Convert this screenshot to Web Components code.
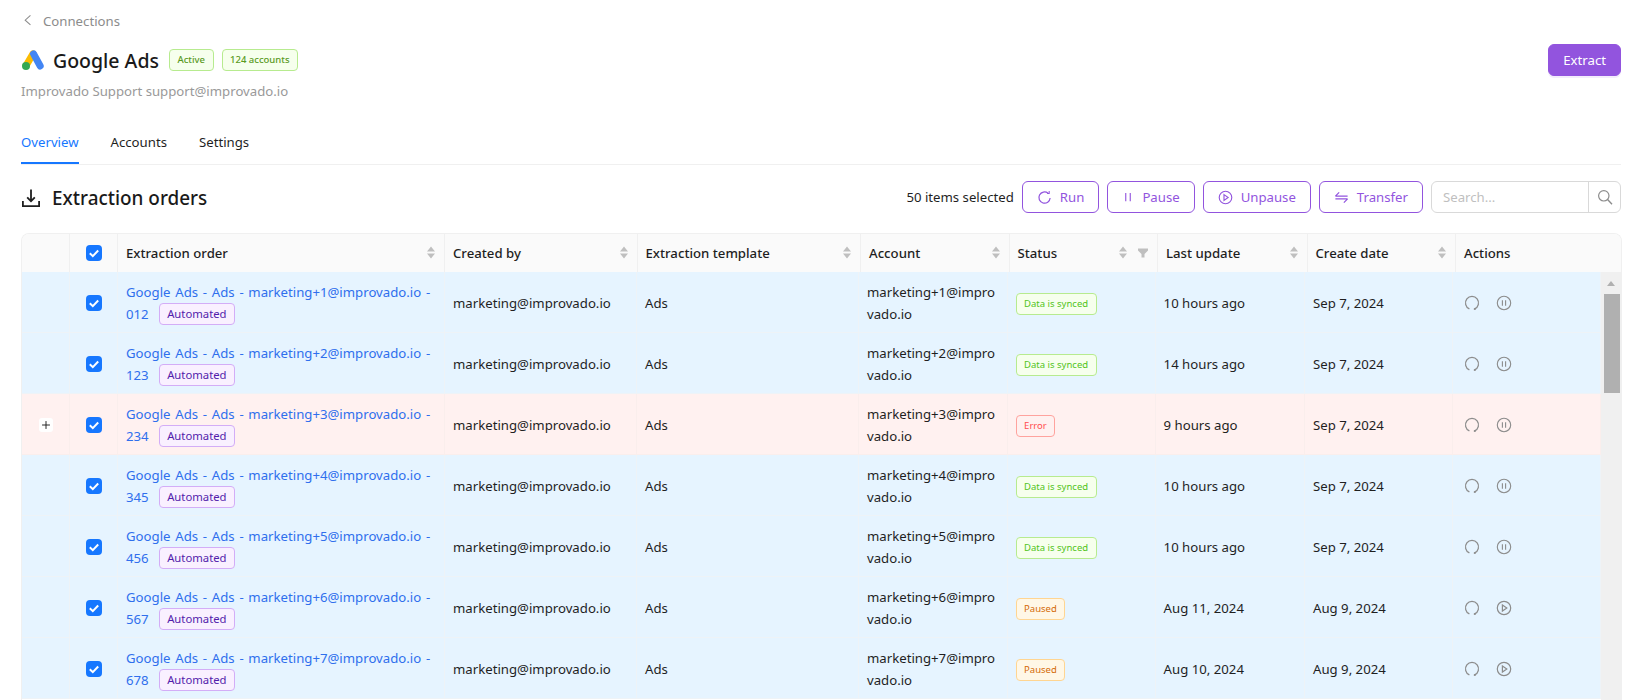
<!DOCTYPE html>
<html lang="en">
<head>
<meta charset="utf-8">
<title>Google Ads - Extraction orders</title>
<style>
    html, body { margin: 0; height: 700px; overflow: hidden; background: #fff; }
    body { font-family: "Noto Sans", "Liberation Sans", sans-serif; font-size: 13.2px; color: #1f1f1f; }
</style>
</head>
<body>
<connection-page>
    <page-header slot="header" name="Google Ads" owner="Improvado Support support@improvado.io" back="Connections">
        <ui-tag slot="tags" kind="green" size="small">Active</ui-tag>
        <ui-tag slot="tags" kind="green" size="small">124 accounts</ui-tag>
        <ui-button slot="action" primary>Extract</ui-button>
    </page-header>
    <ui-tabs slot="tabs" items="Overview,Accounts,Settings" active="0"></ui-tabs>
    <section-bar slot="bar" heading="Extraction orders">
        <span slot="count">50 items selected</span>
        <ui-button slot="tools" icon="run">Run</ui-button>
        <ui-button slot="tools" icon="pause">Pause</ui-button>
        <ui-button slot="tools" icon="play">Unpause</ui-button>
        <ui-button slot="tools" icon="transfer">Transfer</ui-button>
        <ui-search slot="tools" placeholder="Search..."></ui-search>
    </section-bar>
    <orders-table slot="table">
        <order-row n="1" code="012" status="synced" updated="10 hours ago" created="Sep 7, 2024" action="pause"></order-row>
        <order-row n="2" code="123" status="synced" updated="14 hours ago" created="Sep 7, 2024" action="pause"></order-row>
        <order-row n="3" code="234" status="error" updated="9 hours ago" created="Sep 7, 2024" action="pause"></order-row>
        <order-row n="4" code="345" status="synced" updated="10 hours ago" created="Sep 7, 2024" action="pause"></order-row>
        <order-row n="5" code="456" status="synced" updated="10 hours ago" created="Sep 7, 2024" action="pause"></order-row>
        <order-row n="6" code="567" status="paused" updated="Aug 11, 2024" created="Aug 9, 2024" action="play"></order-row>
        <order-row n="7" code="678" status="paused" updated="Aug 10, 2024" created="Aug 9, 2024" action="play"></order-row>
    </orders-table>
</connection-page>

<script>
const ICONS = {
    back: `<path d="M8.5 1.5 2.5 7l6 5.5" fill="none" stroke="currentColor" stroke-width="1.2"/>`,
    run: `<path d="M14 8.5A6 6 0 1 1 11.8 3.4" fill="none" stroke="currentColor" stroke-width="1.3"/><path d="M11.8 1v2.8H9.6" fill="none" stroke="currentColor" stroke-width="1.1" transform="translate(1.2 0)"/>`,
    retry: `<path d="M5.4 13.9A6.5 6.5 0 1 1 10.6 13.9" fill="none" stroke="currentColor" stroke-width="1.3"/><circle cx="10.8" cy="14" r="1.1" fill="currentColor"/>`,
    pause: `<path d="M5 2.5v11M11 2.5v11" fill="none" stroke="currentColor" stroke-width="1.5"/>`,
    pauseCircle: `<circle cx="8" cy="8" r="6.7" fill="none" stroke="currentColor" stroke-width="1.1"/><path d="M6.4 5.2v5.6M9.6 5.2v5.6" fill="none" stroke="currentColor" stroke-width="1.1"/>`,
    play: `<circle cx="8" cy="8" r="6.7" fill="none" stroke="currentColor" stroke-width="1.2"/><path d="M6.4 4.9 10.8 8l-4.4 3.1z" fill="none" stroke="currentColor" stroke-width="1.2"/>`,
    transfer: `<path d="M1.5 6.5h13M1.5 6.5 5.5 2.5M14.5 9.5h-13M14.5 9.5l-4 4" fill="none" stroke="currentColor" stroke-width="1.3"/>`,
    search: `<circle cx="6.8" cy="6.8" r="5.2" fill="none" stroke="currentColor" stroke-width="1.2"/><path d="m10.6 10.6 4.4 4.6" fill="none" stroke="currentColor" stroke-width="1.4"/>`,
    download: `<path d="M8 .5v10M4.6 7.4 8 10.8l3.4-3.4M.8 10.6v4.6h14.4v-4.6" fill="none" stroke="currentColor" stroke-width="1.6"/>`,
    check: `<path d="m3.8 8.2 3 2.9 5.4-5.6" fill="none" stroke="currentColor" stroke-width="2"/>`,
    plus: `<path d="M8 3.5v9M3.5 8h9" fill="none" stroke="currentColor" stroke-width="1.1"/>`,
};

function icon(name, size) {
    return `<svg width="${size}" height="${size}" viewBox="0 0 16 16" aria-hidden="true">${ICONS[name]}</svg>`;
}

class ConnectionPage extends HTMLElement {
    constructor() {
        super();
        this.attachShadow({ mode: "open" });
        this.shadowRoot.innerHTML = `
            <style>
                :host { display: block; padding: 0 31px 0 21px; }
                .tabs { display: block; margin-top: 28px; }
                .bar { display: block; margin-top: 16px; }
                .table { display: block; margin-top: 20px; }
            </style>
            <slot name="header"></slot>
            <div class="tabs"><slot name="tabs"></slot></div>
            <div class="bar"><slot name="bar"></slot></div>
            <div class="table"><slot name="table"></slot></div>
        `;
    }
}

class PageHeader extends HTMLElement {
    constructor() {
        super();
        this.attachShadow({ mode: "open" });
    }

    connectedCallback() {
        this.shadowRoot.innerHTML = `
            <style>
                :host { display: block; }
                .back { display: flex; align-items: center; gap: 6px; height: 22px; padding: 10px 0 12px 2px; color: #8c8c8c; line-height: 22px; }
                .back svg { display: block; }
                .main { display: flex; align-items: center; height: 32px; }
                .logo { display: block; margin: 0 9px 0 1px; }
                h1 { margin: 2px 10px 0 0; font-size: 19.5px; line-height: 28px; font-weight: 500; color: #1a1a1a; }
                .tags { display: flex; gap: 8px; margin-top: -1px; }
                .action { margin-left: auto; }
                .owner { margin-top: 4px; line-height: 22px; color: #999; }
            </style>
            <div class="back">${icon("back", 14)}<span>${this.getAttribute("back")}</span></div>
            <div class="main">
                <svg class="logo" width="22" height="20" viewBox="0 0 22 20" aria-hidden="true">
                    <path d="M11 3.8 4.3 15.2" stroke="#fbbc04" stroke-width="7" stroke-linecap="round"/>
                    <path d="M11.6 3.8 18.2 16" stroke="#4285f4" stroke-width="7" stroke-linecap="round"/>
                    <circle cx="4" cy="16" r="4" fill="#34a853"/>
                </svg>
                <h1>${this.getAttribute("name")}</h1>
                <div class="tags"><slot name="tags"></slot></div>
                <div class="action"><slot name="action"></slot></div>
            </div>
            <div class="owner">${this.getAttribute("owner")}</div>
        `;
    }
}

class UiTag extends HTMLElement {
    constructor() {
        super();
        this.attachShadow({ mode: "open" });
        this.shadowRoot.innerHTML = `
            <style>
                :host { display: inline-flex; align-items: center; box-sizing: border-box; height: 22px; padding: 0 7.5px; border: 1px solid; border-radius: 4px; font-size: 9.5px; white-space: nowrap; line-height: 20px; }
                :host([size="small"]) { font-weight: 500; }
                :host([kind="green"]) { background: #f6ffed; border-color: #b7eb8f; color: #52c41a; }
                :host([kind="green"][size="small"]) { color: #5a9a1f; }
                :host([kind="red"]) { background: #fff1f0; border-color: #ffa39e; color: #ff4d4f; }
                :host([kind="orange"]) { background: #fff7e6; border-color: #ffd591; color: #d46b08; }
                :host([kind="purple"]) { background: #f9f0ff; border-color: #d3adf7; color: #531dab; font-size: 11.3px; }
            </style>
            <slot></slot>
        `;
    }
}

class UiButton extends HTMLElement {
    constructor() {
        super();
        this.attachShadow({ mode: "open" });
    }

    connectedCallback() {
        const name = this.getAttribute("icon");
        this.shadowRoot.innerHTML = `
            <style>
                :host { display: inline-flex; align-items: center; gap: 8px; box-sizing: border-box; height: 32px; padding: 0 14px; border: 1px solid #9254de; border-radius: 6px; background: #fff; color: #9254de; line-height: 22px; white-space: nowrap; }
                :host([primary]) { height: 32px; background: #9254de; color: #fff; box-shadow: 0 2px 0 #f3ecfc; }
                svg { display: block; }
            </style>
            ${name ? icon(name, name === "pause" ? 12 : 15) : ""}<slot></slot>
        `;
    }
}

class UiTabs extends HTMLElement {
    constructor() {
        super();
        this.attachShadow({ mode: "open" });
    }

    connectedCallback() {
        const active = Number(this.getAttribute("active"));
        const items = this.getAttribute("items").split(",");
        this.shadowRoot.innerHTML = `
            <style>
                :host { display: flex; gap: 32px; height: 34px; border-bottom: 1px solid #f0f0f0; }
                .tab { height: 34px; box-sizing: border-box; padding: 1px 0 11px; line-height: 22px; color: #1f1f1f; }
                .on { color: #1677ff; border-bottom: 2px solid #1677ff; }
            </style>
            ${items.map((t, i) => `<div class="tab ${i === active ? "on" : ""}">${t}</div>`).join("")}
        `;
    }
}

class SectionBar extends HTMLElement {
    constructor() {
        super();
        this.attachShadow({ mode: "open" });
    }

    connectedCallback() {
        this.shadowRoot.innerHTML = `
            <style>
                :host { display: flex; align-items: center; height: 32px; }
                svg { display: block; margin: 2px 0 0 1px; }
                h2 { margin: 2px 0 0 12px; font-size: 18.9px; line-height: 28px; font-weight: 500; color: #1a1a1a; }
                .right { display: flex; align-items: center; margin-left: auto; }
                .count { margin-right: 8px; color: #1f1f1f; }
                .tools { display: flex; align-items: center; gap: 8px; }
            </style>
            ${icon("download", 18)}
            <h2>${this.getAttribute("heading")}</h2>
            <div class="right">
                <div class="count"><slot name="count"></slot></div>
                <div class="tools"><slot name="tools"></slot></div>
            </div>
        `;
    }
}

class UiSearch extends HTMLElement {
    constructor() {
        super();
        this.attachShadow({ mode: "open" });
    }

    connectedCallback() {
        this.shadowRoot.innerHTML = `
            <style>
                :host { display: flex; box-sizing: border-box; width: 190px; height: 32px; border: 1px solid #d9d9d9; border-radius: 6px; color: #bfbfbf; }
                .text { flex: 1; padding-left: 11px; line-height: 30px; }
                .btn { display: flex; align-items: center; justify-content: center; width: 31px; border-left: 1px solid #d9d9d9; color: #8c8c8c; }
            </style>
            <div class="text">${this.getAttribute("placeholder")}</div>
            <div class="btn">${icon("search", 16)}</div>
        `;
    }
}

class SortCaret extends HTMLElement {
    constructor() {
        super();
        this.attachShadow({ mode: "open" });
        this.shadowRoot.innerHTML = `
            <style>:host { display: block; } svg { display: block; }</style>
            <svg width="10" height="13" viewBox="0 0 10 13" aria-hidden="true">
                <path d="M5 .5 9 5.5H1zM5 12.5 1 7.5h8z" fill="#bfbfbf"/>
            </svg>
        `;
    }
}

class OrdersTable extends HTMLElement {
    constructor() {
        super();
        this.attachShadow({ mode: "open" });
    }

    connectedCallback() {
        const cols = [
            ["Extraction order", 1],
            ["Created by", 1],
            ["Extraction template", 1],
            ["Account", 1],
            ["Status", 2],
            ["Last update", 1],
            ["Create date", 1],
            ["Actions", 0],
        ];
        this.shadowRoot.innerHTML = `
            <style>
                :host { display: block; box-sizing: border-box; width: 1601px; border: 1px solid #f0f0f0; border-bottom: 0; border-radius: 8px 8px 0 0; overflow: hidden; }
                .head { display: grid; grid-template-columns: 48px 48px 327px 192.5px 223.5px 148.5px 148.5px 149.5px 148.5px 1fr; height: 38px; background: #fafafa; }
                .th { display: flex; align-items: center; gap: 8px; box-sizing: border-box; padding: 0 8px 1px; border-right: 1px solid #f0f0f0; font-weight: 500; color: #1f1f1f; }
                .th:last-child { border-right: 0; }
                .th span { flex: 1; }
                .th.mid { justify-content: center; padding: 0 0 1px; }
                .filter { display: block; margin: 0 1px 0 2px; }
                .body { display: flex; height: 428px; }
                .rows { width: 1579px; overflow: hidden; }
                .scroll { position: relative; flex: 1; background: #f0f0f0; }
                .up { width: 0; height: 0; margin: 9px auto 0; border: 4px solid transparent; border-top: 0; border-bottom: 5px solid #b0b0b0; }
                .thumb { height: 99px; margin: 8px 1px 0 3px; background: #b0b0b0; }
            </style>
            <div class="head">
                <div class="th"></div>
                <div class="th mid"><ui-checkbox></ui-checkbox></div>
                ${cols.map(([label, sort]) => `
                    <div class="th">
                        <span>${label}</span>
                        ${sort ? "<sort-caret></sort-caret>" : ""}
                        ${sort === 2 ? `<svg class="filter" width="10" height="10" viewBox="0 0 10 10" aria-hidden="true"><path d="M0 .5h10v2L6.5 6v3.5h-3V6L0 2.5z" fill="#bfbfbf"/></svg>` : ""}
                    </div>
                `).join("")}
            </div>
            <div class="body">
                <div class="rows"><slot></slot></div>
                <div class="scroll"><div class="up"></div><div class="thumb"></div></div>
            </div>
        `;
    }
}

class UiCheckbox extends HTMLElement {
    constructor() {
        super();
        this.attachShadow({ mode: "open" });
        this.shadowRoot.innerHTML = `
            <style>
                :host { display: block; width: 16px; height: 16px; border-radius: 4px; background: #1677ff; color: #fff; }
                svg { display: block; }
            </style>
            ${icon("check", 16)}
        `;
    }
}

const STATUS = {
    synced: ["green", "Data is synced"],
    error: ["red", "Error"],
    paused: ["orange", "Paused"],
};

class OrderRow extends HTMLElement {
    constructor() {
        super();
        this.attachShadow({ mode: "open" });
    }

    connectedCallback() {
        const n = this.getAttribute("n");
        const status = this.getAttribute("status");
        const [kind, label] = STATUS[status];
        const action = this.getAttribute("action") === "play" ? "play" : "pauseCircle";
        this.shadowRoot.innerHTML = `
            <style>
                :host { display: grid; grid-template-columns: 48px 48px 327px 192px 222px 148.6px 148px 149.4px 148px 148px; height: 61px; background: #e6f4ff; }
                :host([status="error"]) { background: #fff1f0; }
                .td { display: flex; align-items: center; box-sizing: border-box; height: 61px; padding: 2px 8px 0; border-right: 1px solid #eef3f7; border-bottom: 1px solid #eef3f7; line-height: 22px; color: #1f1f1f; min-width: 0; }
                :host([status="error"]) .td { border-color: #faeeec; }
                .mid { justify-content: center; padding: 2px 0 0; }
                .td > div { min-width: 0; }
                .link { color: #2f6fed; word-spacing: 1.3px; white-space: nowrap; }
                .second { display: flex; align-items: center; gap: 10px; height: 22px; }
                .state { margin-top: 2px; }
                .account { word-break: break-all; }
                .plus { display: flex; width: 14px; height: 14px; border-radius: 3px; background: #fff; color: #1f1f1f; }
                .acts { display: flex; align-items: center; gap: 16px; padding-left: 3px; color: #8c8c8c; }
                svg { display: block; }
            </style>
            <div class="td mid">${status === "error" ? `<div class="plus">${icon("plus", 14)}</div>` : ""}</div>
            <div class="td mid"><ui-checkbox></ui-checkbox></div>
            <div class="td"><div>
                <div class="link">Google Ads - Ads - marketing+${n}@improvado.io -</div>
                <div class="second"><span class="link">${this.getAttribute("code")}</span><ui-tag kind="purple">Automated</ui-tag></div>
            </div></div>
            <div class="td">marketing@improvado.io</div>
            <div class="td">Ads</div>
            <div class="td"><div class="account">marketing+${n}@improvado.io</div></div>
            <div class="td"><ui-tag class="state" kind="${kind}">${label}</ui-tag></div>
            <div class="td">${this.getAttribute("updated")}</div>
            <div class="td">${this.getAttribute("created")}</div>
            <div class="td"><div class="acts">${icon("retry", 16)}${icon(action, 16)}</div></div>
        `;
    }
}

// children first so nothing renders before its parts exist
customElements.define("ui-tag", UiTag);
customElements.define("ui-button", UiButton);
customElements.define("ui-tabs", UiTabs);
customElements.define("ui-search", UiSearch);
customElements.define("ui-checkbox", UiCheckbox);
customElements.define("sort-caret", SortCaret);
customElements.define("order-row", OrderRow);
customElements.define("orders-table", OrdersTable);
customElements.define("section-bar", SectionBar);
customElements.define("page-header", PageHeader);
customElements.define("connection-page", ConnectionPage);
</script>
</body>
</html>
